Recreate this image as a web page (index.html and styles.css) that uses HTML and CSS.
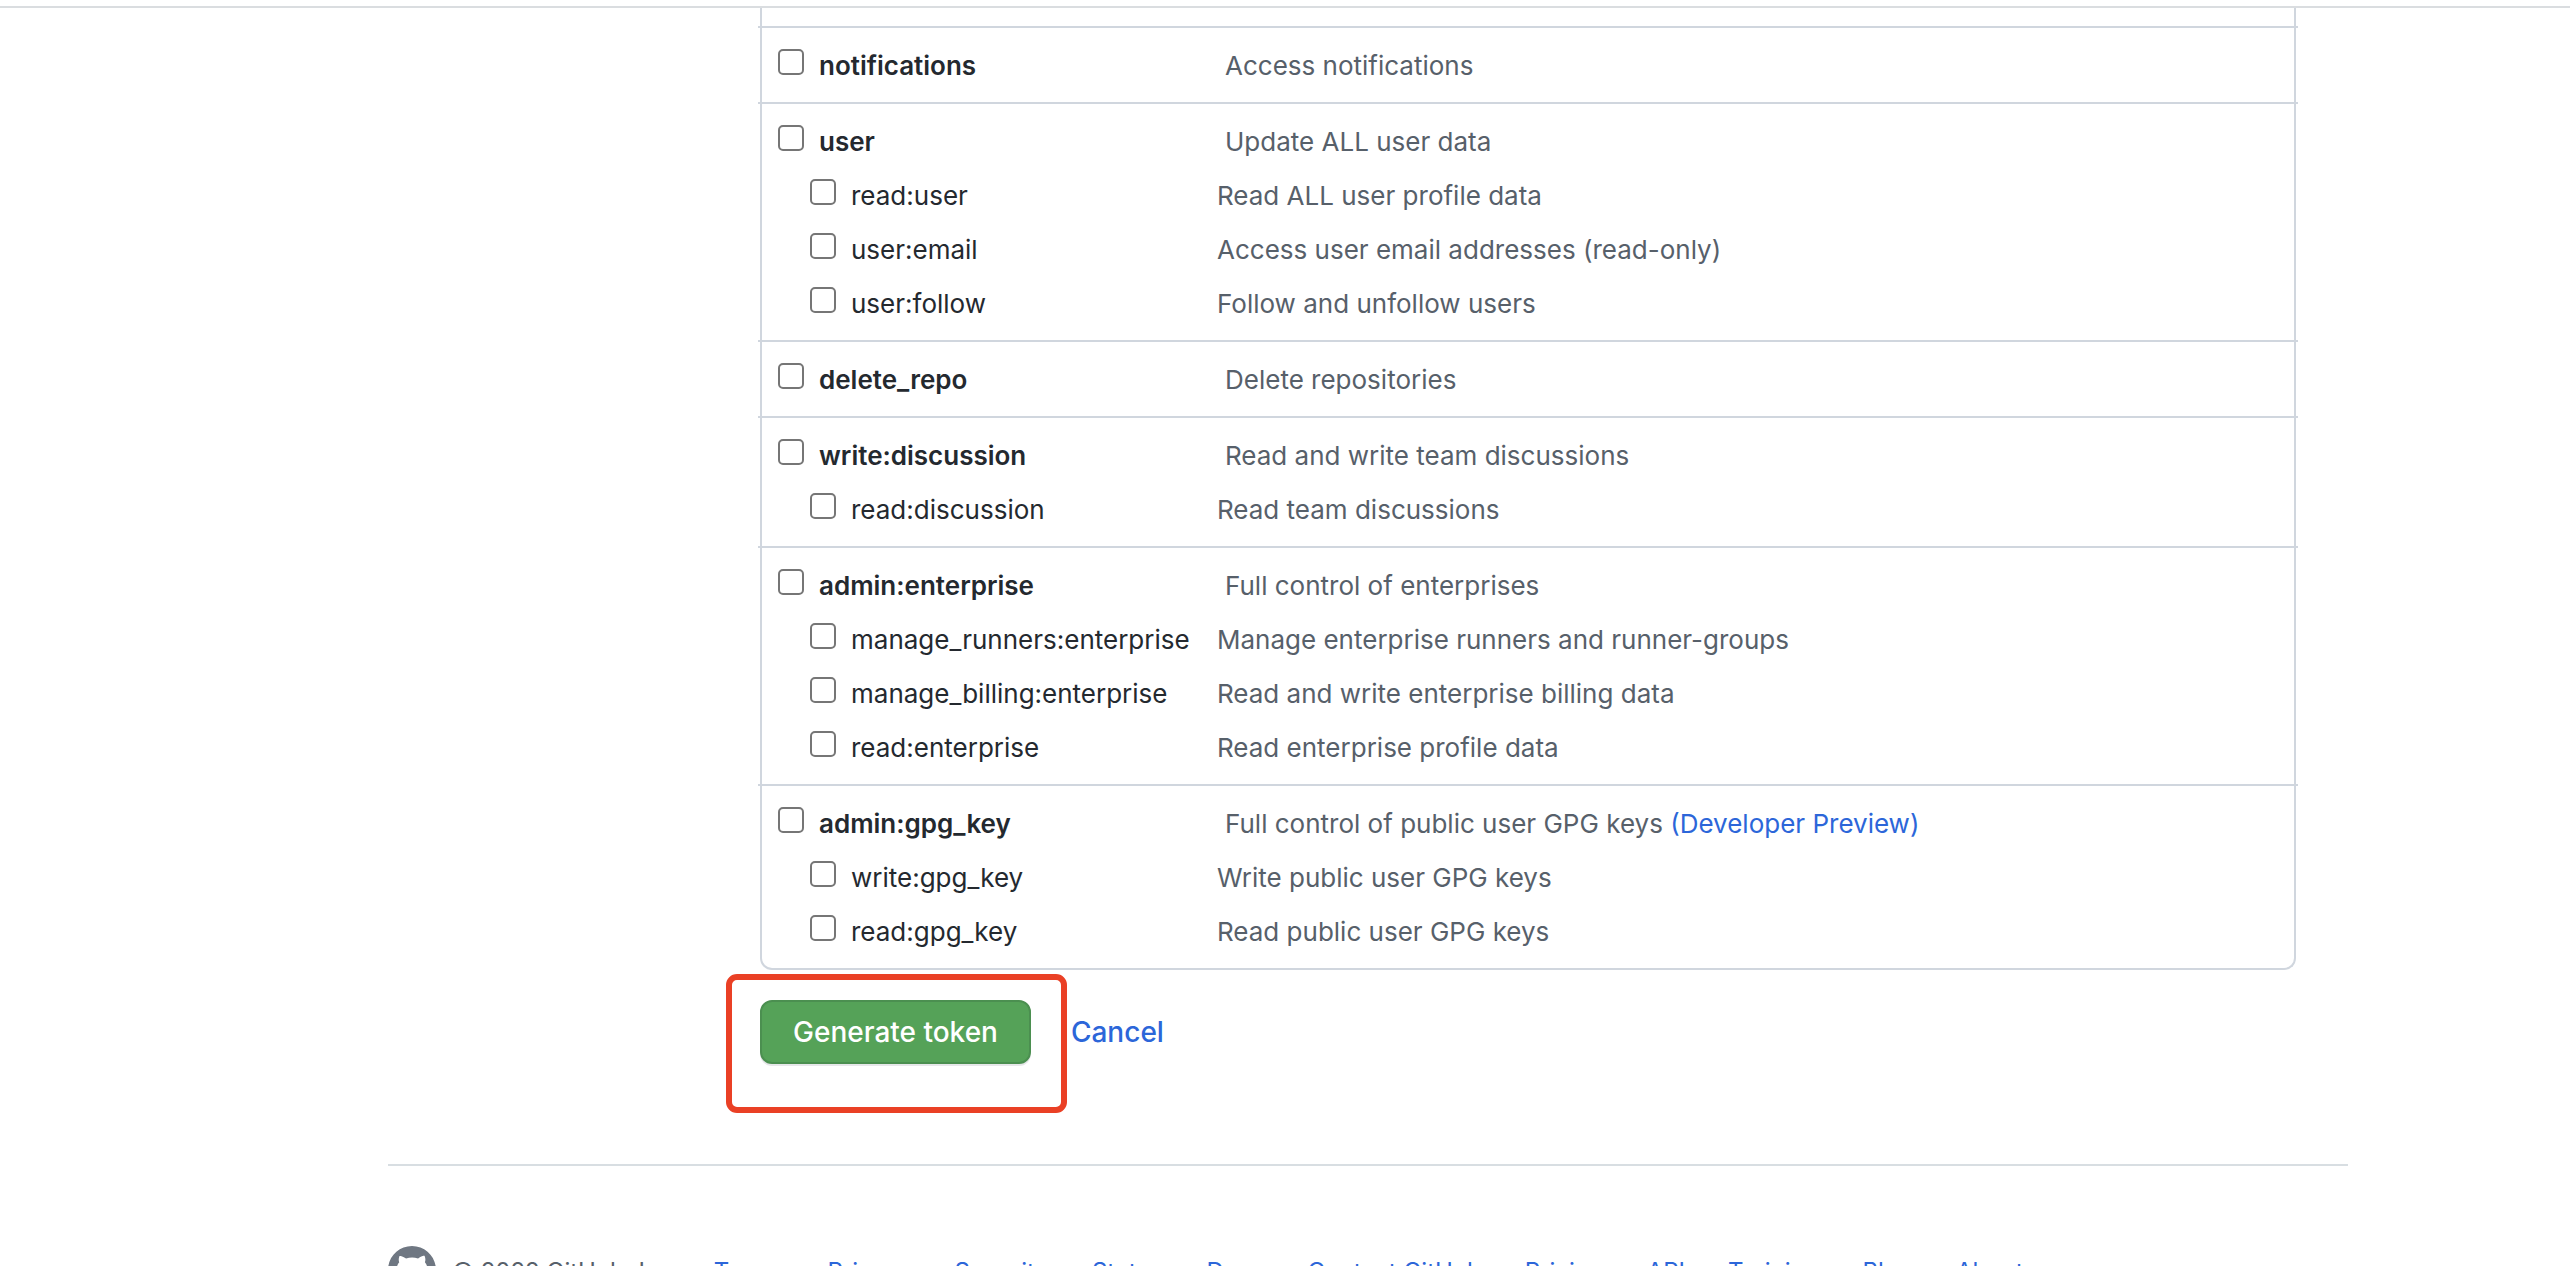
FILE: index.html
```html
<!DOCTYPE html>
<html lang="en">
<head>
<meta charset="utf-8">
<title>New personal access token</title>
<link rel="stylesheet" href="styles.css">
</head>
<body>
<div class="topbar"></div>
<main class="page">
  <form class="token-form">
    <ul class="scopes">
      <li class="group">
        <div class="scope"><label class="name"><input type="checkbox">notifications</label><span class="desc">Access notifications</span></div>
      </li>
      <li class="group">
        <div class="scope"><label class="name"><input type="checkbox">user</label><span class="desc">Update ALL user data</span></div>
        <div class="scope child"><label class="name"><input type="checkbox">read:user</label><span class="desc">Read ALL user profile data</span></div>
        <div class="scope child"><label class="name"><input type="checkbox">user:email</label><span class="desc">Access user email addresses (read-only)</span></div>
        <div class="scope child"><label class="name"><input type="checkbox">user:follow</label><span class="desc">Follow and unfollow users</span></div>
      </li>
      <li class="group">
        <div class="scope"><label class="name"><input type="checkbox">delete_repo</label><span class="desc">Delete repositories</span></div>
      </li>
      <li class="group">
        <div class="scope"><label class="name"><input type="checkbox">write:discussion</label><span class="desc">Read and write team discussions</span></div>
        <div class="scope child"><label class="name"><input type="checkbox">read:discussion</label><span class="desc">Read team discussions</span></div>
      </li>
      <li class="group">
        <div class="scope"><label class="name"><input type="checkbox">admin:enterprise</label><span class="desc">Full control of enterprises</span></div>
        <div class="scope child"><label class="name"><input type="checkbox">manage_runners:enterprise</label><span class="desc">Manage enterprise runners and runner-groups</span></div>
        <div class="scope child"><label class="name"><input type="checkbox">manage_billing:enterprise</label><span class="desc">Read and write enterprise billing data</span></div>
        <div class="scope child"><label class="name"><input type="checkbox">read:enterprise</label><span class="desc">Read enterprise profile data</span></div>
      </li>
      <li class="group">
        <div class="scope"><label class="name"><input type="checkbox">admin:gpg_key</label><span class="desc">Full control of public user GPG keys <a href="#">(Developer Preview)</a></span></div>
        <div class="scope child"><label class="name"><input type="checkbox">write:gpg_key</label><span class="desc">Write public user GPG keys</span></div>
        <div class="scope child"><label class="name"><input type="checkbox">read:gpg_key</label><span class="desc">Read public user GPG keys</span></div>
      </li>
    </ul>
    <div class="actions">
      <div class="marked"><button class="primary" type="submit">Generate token</button></div>
      <a class="cancel" href="#">Cancel</a>
    </div>
  </form>
  <footer class="footer">
    <svg class="mark" viewBox="0 0 16 16" aria-hidden="true"><path fill-rule="evenodd" d="M8 0C3.58 0 0 3.58 0 8c0 3.54 2.29 6.53 5.47 7.59.4.07.55-.17.55-.38 0-.19-.01-.82-.01-1.49-2.01.37-2.53-.49-2.69-.94-.09-.23-.48-.94-.82-1.13-.28-.15-.68-.52-.01-.53.63-.01 1.08.58 1.23.82.72 1.21 1.87.87 2.33.66.07-.52.28-.87.51-1.07-1.78-.2-3.64-.89-3.64-3.95 0-.87.31-1.59.82-2.15-.08-.2-.36-1.02.08-2.12 0 0 .67-.21 2.2.82.64-.18 1.32-.27 2-.27.68 0 1.36.09 2 .27 1.53-1.04 2.2-.82 2.2-.82.44 1.1.16 1.92.08 2.12.51.56.82 1.27.82 2.15 0 3.07-1.87 3.75-3.65 3.95.29.25.54.73.54 1.48 0 1.07-.01 1.93-.01 2.2 0 .21.15.46.55.38A8.013 8.013 0 0016 8c0-4.42-3.58-8-8-8z"/></svg>
    <span class="copyright">© 2022 GitHub, Inc.</span>
    <ul class="links">
      <li><a href="#">Terms</a></li>
      <li><a href="#">Privacy</a></li>
      <li><a href="#">Security</a></li>
      <li><a href="#">Status</a></li>
      <li><a href="#">Docs</a></li>
      <li><a href="#">Contact GitHub</a></li>
      <li><a href="#">Pricing</a></li>
      <li><a href="#">API</a></li>
      <li><a href="#">Training</a></li>
      <li><a href="#">Blog</a></li>
      <li><a href="#">About</a></li>
    </ul>
  </footer>
</main>
</body>
</html>
```
FILE: styles.css
```css
* { box-sizing: border-box; }

body {
  margin: 0;
  height: 100vh;
  overflow: hidden;
  background: #fff;
  color: #24292f;
  font: 26px/36px Inter, sans-serif;
}

a { color: #2c66d9; text-decoration: none; }

ul { list-style: none; margin: 0; padding: 0; }

.topbar {
  height: 8px;
  border-bottom: 2px solid #dadde0;
}

.page { padding: 0 222px 0 388px; }

.token-form { margin: 0 52px 0 372px; }

.scopes {
  padding-top: 18px;
  border: 2px solid #d0d6de;
  border-top: 0;
  border-radius: 0 0 12px 12px;
}

/* dividers run slightly past the side borders */
.group {
  margin: 0 -4px;
  padding: 10px 20px;
  border-top: 2px solid #d0d6de;
}

.scope {
  display: grid;
  grid-template-columns: 447px 1fr;
  align-items: center;
  height: 54px;
  padding-top: 2px;
}

.scope.child {
  grid-template-columns: 407px 1fr;
  padding-left: 32px;
}

.name {
  display: flex;
  align-items: center;
  gap: 15px;
  font-weight: 600;
}

.child .name { font-weight: 400; }

.name input {
  appearance: none;
  width: 26px;
  height: 26px;
  margin: 0 0 8px;
  border: 2px solid #767676;
  border-radius: 5px;
  background: #fff;
}

.name input:checked { background: #2c66d9; }

.desc { color: #57606a; }

.actions {
  display: flex;
  align-items: center;
  gap: 40px;
  margin-top: 30px;
  font-size: 28px;
  font-weight: 500;
}

.marked { position: relative; }

.marked::after {
  content: "";
  position: absolute;
  inset: -26px -36px -49px -34px;
  border: 6px solid #ea4025;
  border-radius: 11px;
  pointer-events: none;
}

.primary {
  display: block;
  height: 64px;
  padding: 0 31px;
  border: 2px solid #4b8f50;
  border-radius: 12px;
  background: #55a258;
  box-shadow: 0 2px 0 #e6e7e9;
  color: #fff;
  font: inherit;
}

.footer {
  display: flex;
  align-items: center;
  margin-top: 100px;
  padding-top: 80px;
  border-top: 2px solid #d8dee2;
  color: #57606a;
  font-size: 24px;
}

.mark {
  width: 48px;
  height: 48px;
  fill: #6f7782;
}

.copyright { margin-left: 16px; padding-top: 4px; }

.links {
  display: flex;
  gap: 43px;
  margin-left: 34px;
  padding-top: 4px;
}
```
